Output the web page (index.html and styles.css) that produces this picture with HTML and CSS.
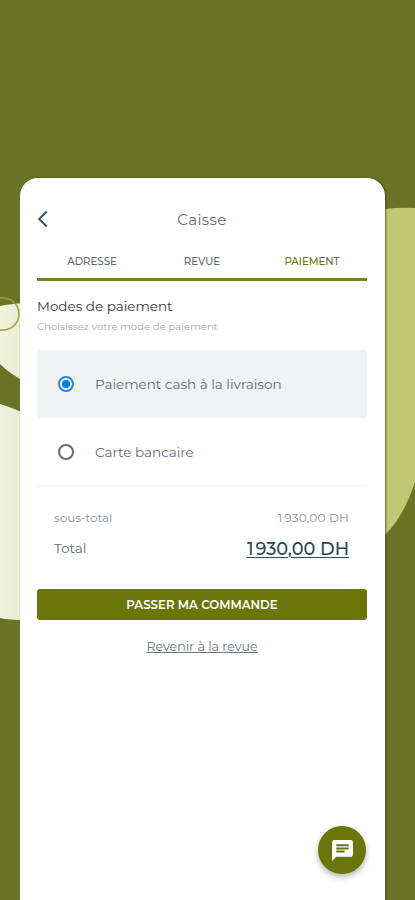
FILE: index.html
```html
<!DOCTYPE html>
<html lang="fr">
<head>
<meta charset="utf-8">
<title>Caisse</title>
<link rel="stylesheet" href="styles.css">
</head>
<body>
<svg class="backdrop" viewBox="0 0 415 900" aria-hidden="true">
  <defs>
    <linearGradient id="cream" x1="0" y1="0" x2="1" y2="0"><stop offset="0" stop-color="#f0f2de"/><stop offset="1" stop-color="#e7ebcf"/></linearGradient>
  </defs>
  <path d="M385 209Q400 207 415 208V482Q404 516 385 535Z" fill="#bfc873"/>
  <path d="M0 306Q10 304 24 303V381Q10 374 0 364Z" fill="url(#cream)"/>
  <path d="M0 404Q10 407 24 413V620Q10 620 0 618Z" fill="url(#cream)"/>
  <rect x="-22" y="298" width="41" height="32" rx="16" fill="none" stroke="#96a33b" stroke-width="1.5"/>
</svg>
<main class="card">
  <header class="bar">
    <svg class="back" viewBox="0 0 12 18"><path d="M9.800 1.500 2.200 9l7.600 7.500"/></svg>
    <h1 class="title">Caisse</h1>
  </header>
  <nav class="tabs">
    <span class="tab tab-address">ADRESSE</span>
    <span class="tab tab-review">REVUE</span>
    <span class="tab tab-pay">PAIEMENT</span>
  </nav>
  <h2 class="heading">Modes de paiement</h2>
  <p class="hint">Choisissez votre mode de paiement</p>
  <div class="option selected"><i class="radio"></i><span class="cash">Paiement cash à la livraison</span></div>
  <div class="option last"><i class="radio"></i><span class="bank">Carte bancaire</span></div>
  <div class="totals">
    <div class="row sub"><span class="sub-label">sous-total</span><span class="sub-value"><span class="thousand">1</span>930,00 DH</span></div>
    <div class="row total"><span class="total-label">Total</span><span class="amount"><span class="thousand">1</span>930,00 DH</span></div>
  </div>
  <div class="submit"><span>PASSER MA COMMANDE</span></div>
  <a class="return"><span>Revenir à la revue</span></a>
</main>
<div class="chat">
  <svg viewBox="0 0 24 24"><path fill="#fff" d="M20 2H4c-1.100 0-2 .9-2 2v18l4-4h14c1.100 0 2-.9 2-2V4c0-1.100-.9-2-2-2z"/><path fill="#697608" d="M6 6h12v2H6zM6 9h12v2H6zM6 12h8v2H6z"/></svg>
</div>
</body>
</html>
```

FILE: styles.css
```css
* { box-sizing: border-box; }
body {
  margin: 0;
  height: 900px;
  padding: 178px 30px 0 20px;
  overflow: hidden;
  background: #6a7425;
  font-family: Montserrat, Inter, sans-serif;
  color: #5b6b75;
}
.backdrop { position: absolute; left: 0; top: 0; width: 415px; height: 900px; }
.card {
  position: relative;
  height: 740px;
  padding: 0 18px 0 17px;
  background: #fff;
  border-radius: 18px 18px 0 0;
  box-shadow: 1px 0 2px rgba(40, 48, 0, .6);
}
.bar { height: 82px; display: grid; grid-template-columns: 12px 1fr 12px; align-items: center; }
.back { width: 12px; height: 18px; fill: none; stroke: #315565; stroke-width: 2; }
.title { margin: 0; font-size: 15px; font-weight: 400; text-align: center; letter-spacing: .4px; }
.tabs {
  height: 21px;
  border-bottom: 3px solid #768427;
  display: grid;
  grid-template-columns: repeat(3, 1fr);
  text-align: center;
  font-size: 10.200px;
  font-weight: 500;
  line-height: 1;
}
.tab { margin-top: -3px; }
.tab-pay { color: #697608; }
.heading { margin: 14px 0 0; font-size: 13.500px; line-height: 22px; font-weight: 400; color: #303638; letter-spacing: 0; }
.hint { margin: 3px 0 16px; font-size: 10px; line-height: 14px; color: #a1a8ad; letter-spacing: .07px; }
.option { height: 68px; display: flex; align-items: center; padding-left: 21px; gap: 21px; font-size: 13.500px; }
.last { height: 67px; }
.selected { background: #f0f2f3; }
.radio { width: 16px; height: 16px; border: 2px solid #666b70; border-radius: 50%; }
.selected .radio { border-color: #2484e5; background: radial-gradient(circle, #167be1 0 4px, #fff 4.500px); }
.totals { border-top: 2px solid #f8f9f9; padding: 19px 18px 0 17px; }
.row { display: flex; align-items: center; justify-content: space-between; white-space: nowrap; }
.sub { height: 22px; font-size: 12px; color: #87919a; }
.sub-label { letter-spacing: -.1px; }
.sub-value { letter-spacing: .2px; }
.thousand { letter-spacing: 2px; }
.total { height: 40px; font-size: 13.500px; }
.amount { font-size: 17.700px; font-weight: 500; color: #24495a; text-decoration: underline 1px; text-underline-offset: 2px; }
.submit { height: 31px; margin-top: 21px; display: flex; align-items: center; justify-content: center; border-radius: 3px; background: #697608; color: #fff; font-size: 11.800px; font-weight: 600; }
.return { height: 18px; margin-top: 18px; display: flex; justify-content: center; font-size: 12.600px; line-height: 18px; color: #65747e; }
.return span { text-decoration: underline 1px; text-underline-offset: 1px; }
.chat { position: absolute; left: 318px; top: 826px; width: 48px; height: 48px; display: flex; align-items: center; justify-content: center; border-radius: 50%; background: #697608; box-shadow: 0 3px 6px rgba(0, 0, 0, .3); }
.chat svg { width: 25px; height: 25px; }
```
